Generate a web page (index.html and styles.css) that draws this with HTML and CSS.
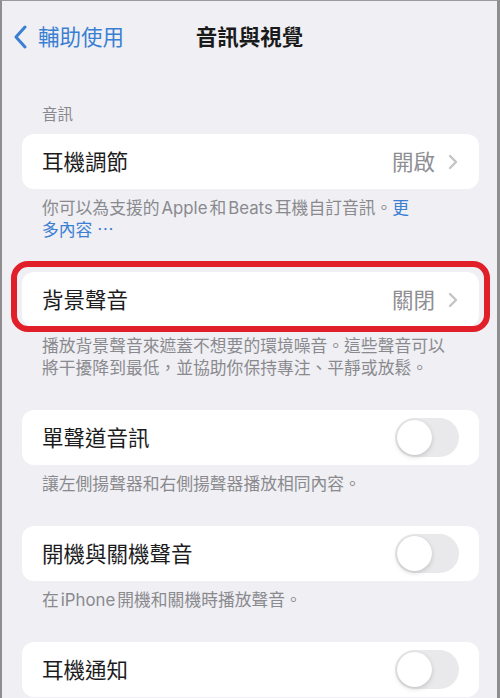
FILE: index.html
```html
<!DOCTYPE html>
<html lang="zh-Hant">
<head>
<meta charset="utf-8">
<title>音訊與視覺</title>
<link rel="stylesheet" href="styles.css">
</head>
<body>
<div class="screen">
  <header class="nav">
    <a class="back">
      <svg class="back-chev" width="13" height="24" viewBox="0 0 13 24"><path d="M11 2 L2 12 L11 22" fill="none" stroke="#3b7fd2" stroke-width="3" stroke-linecap="round" stroke-linejoin="round"/></svg>
      <span>輔助使用</span>
    </a>
    <h1 class="title">音訊與視覺</h1>
    <span></span>
  </header>

  <div class="section-head">音訊</div>

  <div class="card">
    <span class="label">耳機調節</span>
    <span class="value">開啟</span>
    <svg class="chev" width="10" height="16" viewBox="0 0 10 16"><path d="M2 2 L8 8 L2 14" fill="none" stroke="#c4c4c7" stroke-width="2.4" stroke-linecap="round" stroke-linejoin="round"/></svg>
  </div>
  <p class="foot">你可以為支援的<span class="latin">Apple</span>和<span class="latin">Beats</span>耳機自訂音訊。<a class="link">更<br>多內容 ⋯</a></p>

  <div class="card highlighted">
    <span class="label">背景聲音</span>
    <span class="value">關閉</span>
    <svg class="chev" width="10" height="16" viewBox="0 0 10 16"><path d="M2 2 L8 8 L2 14" fill="none" stroke="#c4c4c7" stroke-width="2.4" stroke-linecap="round" stroke-linejoin="round"/></svg>
    <span class="redbox"></span>
  </div>
  <p class="foot">播放背景聲音來遮蓋不想要的環境噪音。這些聲音可以<br>將干擾降到最低，並協助你保持專注、平靜或放鬆。</p>

  <div class="card">
    <span class="label">單聲道音訊</span>
    <span class="toggle"><span class="knob"></span></span>
  </div>
  <p class="foot">讓左側揚聲器和右側揚聲器播放相同內容。</p>

  <div class="card">
    <span class="label">開機與關機聲音</span>
    <span class="toggle"><span class="knob"></span></span>
  </div>
  <p class="foot">在<span class="latin">iPhone</span>開機和關機時播放聲音。</p>

  <div class="card">
    <span class="label">耳機通知</span>
    <span class="toggle"><span class="knob"></span></span>
  </div>
</div>
</body>
</html>
```

FILE: styles.css
```css
* { box-sizing: border-box; }
html, body {
  margin: 0;
  padding: 0;
  width: 500px;
  height: 698px;
  overflow: hidden;
  background: #efeff4;
}
.screen {
  width: 500px;
  min-height: 698px;
  background: #efeff4;
  border-top: 1px solid #9a9a9c;
  border-left: 2px solid #8e8e90;
  border-right: 3px solid #8e8e90;
  font-family: "Inter", "Noto Sans CJK TC", sans-serif;
  color: #1c1c1e;
}
.nav {
  height: 72px;
  display: grid;
  grid-template-columns: 1fr auto 1fr;
  align-items: center;
}
.back {
  display: flex;
  align-items: center;
  gap: 11px;
  padding-left: 12px;
  color: #3b7fd2;
  font-size: 21.5px;
  line-height: 28px;
}
.back-chev { display: block; }
.title {
  margin: 0;
  font-size: 21.5px;
  font-weight: 700;
  line-height: 28px;
  color: #1a1a1a;
}
.section-head {
  margin-top: 32px;
  padding-left: 40px;
  font-size: 15.5px;
  line-height: 20px;
  color: #8a8a8e;
  margin-bottom: 9px;
}
.card {
  position: relative;
  height: 55px;
  margin: 0 18px 0 20px;
  padding: 0 20px 0 20px;
  background: #ffffff;
  border-radius: 12px;
  display: flex;
  align-items: center;
}
.label {
  flex: 1;
  font-size: 21.5px;
  line-height: 28px;
  color: #1c1c1e;
}
.value {
  font-size: 21.5px;
  line-height: 28px;
  color: #8e8e93;
  margin-right: 13px;
}
.chev { display: block; margin-right: 1px; }
.foot {
  margin: 0;
  padding: 8px 30px 31px 40px;
  font-size: 16.8px;
  line-height: 22px;
  color: #8a8a8e;
}
.latin { margin: 0 2px; }
.link { color: #3b7fd2; }
.redbox {
  position: absolute;
  top: -11px;
  bottom: -5px;
  left: -11px;
  right: -11px;
  border: 6px solid #e01f29;
  border-radius: 17px;
  pointer-events: none;
}
.toggle {
  position: relative;
  width: 64px;
  height: 39px;
  border-radius: 20px;
  background: #e9e9eb;
}
.knob {
  position: absolute;
  top: 2px;
  left: 2px;
  width: 35px;
  height: 35px;
  border-radius: 50%;
  background: #ffffff;
  box-shadow: 0 2px 5px rgba(0,0,0,0.15), 0 0 1px rgba(0,0,0,0.12);
}
```
